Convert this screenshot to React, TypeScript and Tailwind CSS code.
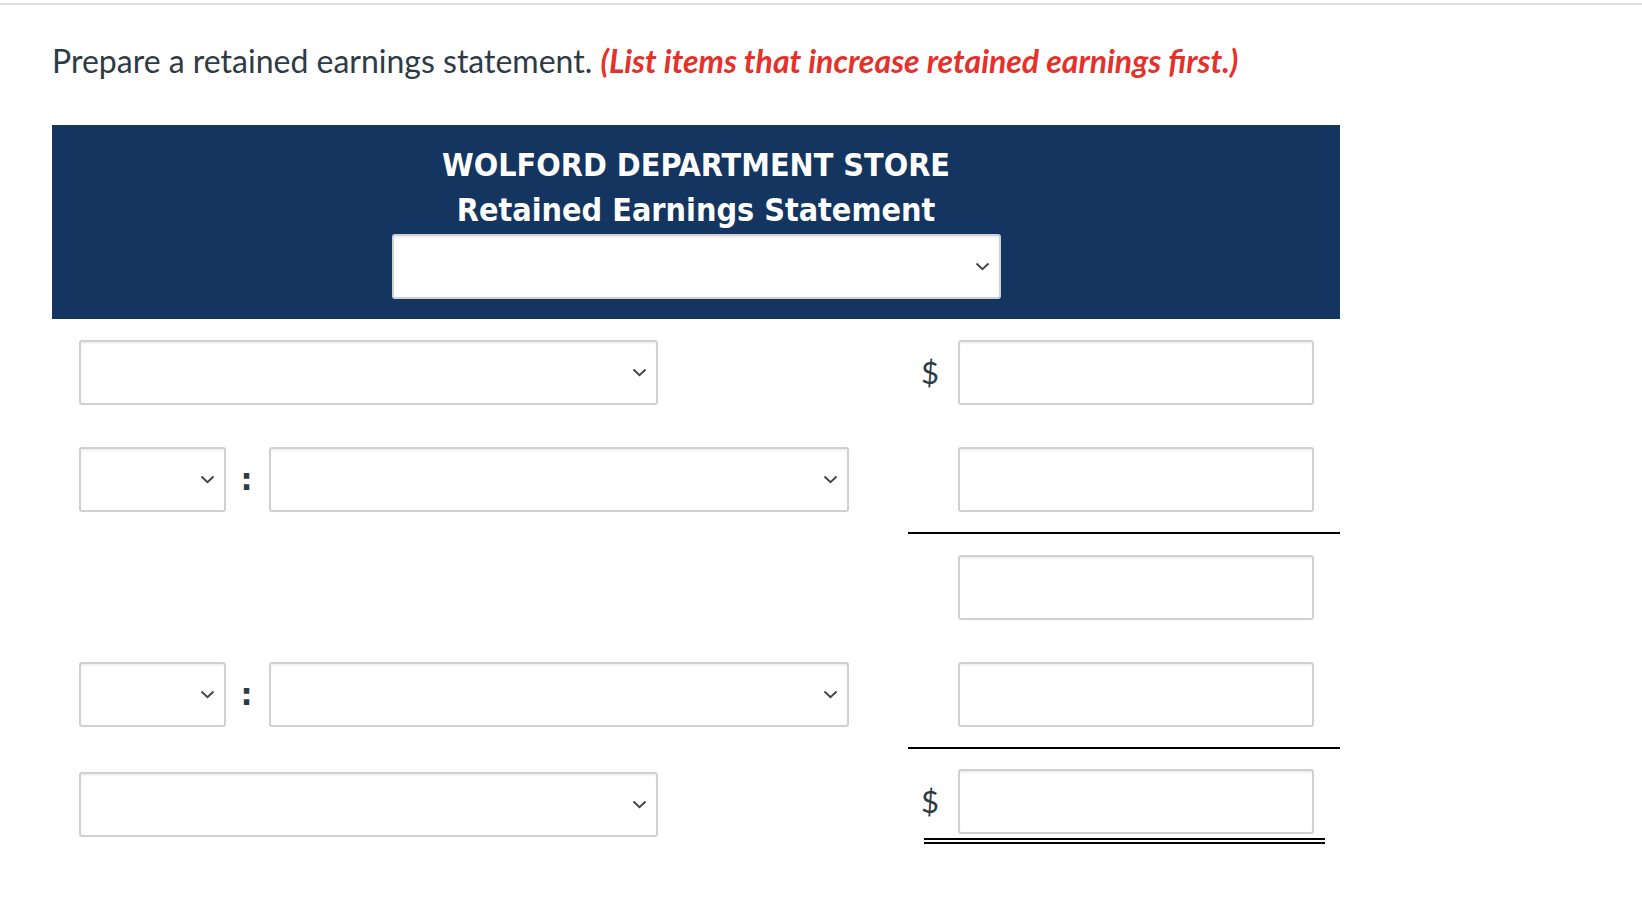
import React from "react";

function Chevron() {
  return (
    <svg width="15" height="9" viewBox="0 0 15 9" fill="none" stroke="#444444" strokeWidth="1.9">
      <path d="M1.5 1.5 7.5 7.3 13.5 1.5" />
    </svg>
  );
}

function Select({ width }: { width: string }) {
  return (
    <div
      className={`${width} h-[65px] flex items-center justify-end pr-[9px] bg-white border-2 border-[#d0d0d0] rounded-[3px] shadow-[inset_0_2px_2px_rgba(0,0,0,0.06)]`}
    >
      <Chevron />
    </div>
  );
}

function Amount({ dollar }: { dollar?: boolean }) {
  return (
    <div className="flex items-center">
      <div className="w-[50px] pr-[19px] text-right text-[31px] text-[#2d3b45]">{dollar ? "$" : ""}</div>
      <div className="w-[356px] h-[65px] bg-white border-2 border-[#d0d0d0] rounded-[3px] shadow-[inset_0_2px_2px_rgba(0,0,0,0.06)]" />
    </div>
  );
}

function PairSelect() {
  return (
    <div className="flex items-center">
      <Select width="w-[147px]" />
      <div className="w-[43px] pr-[2px] text-center text-[30px] font-bold text-[#2d3b45] leading-none font-['DejaVu_Sans',sans-serif]">:</div>
      <Select width="w-[580px]" />
    </div>
  );
}

export default function App() {
  return (
    <div className="min-h-screen bg-white font-['Lato',sans-serif]">
      <div className="mt-[3px] h-[2px] bg-[#dddddd]" />
      <div className="pl-[52px]">
        <p className="mt-[37px] text-[32px] leading-[38px] text-[#2d3b45]">
          Prepare a retained earnings statement.{" "}
          <span className="italic font-bold text-[#e5312a]">(List items that increase retained earnings first.)</span>
        </p>

        <div className="mt-[45px] w-[1288px]">
          {/* heading */}
          <div className="h-[194px] bg-[#13355f] flex flex-col items-center pt-[18px]">
            <div className="text-[32px] leading-[45px] font-bold font-stretch-condensed text-white font-['DejaVu_Sans_Condensed','DejaVu_Sans',sans-serif]">
              WOLFORD DEPARTMENT STORE
            </div>
            <div className="text-[32px] leading-[45px] font-bold font-stretch-condensed text-white font-['DejaVu_Sans_Condensed','DejaVu_Sans',sans-serif]">
              Retained Earnings Statement
            </div>
            <div className="mt-[1px]">
              <Select width="w-[609px]" />
            </div>
          </div>

          {/* row 1 */}
          <div className="flex">
            <div className="w-[856px] pl-[27px] pt-[21px]">
              <Select width="w-[579px]" />
            </div>
            <div className="w-[432px] pt-[21px] pb-[21px]">
              <Amount dollar />
            </div>
          </div>

          {/* row 2 */}
          <div className="flex">
            <div className="w-[856px] pl-[27px] pt-[21px]">
              <PairSelect />
            </div>
            <div className="w-[432px] pt-[21px] pb-[20px] border-b-2 border-black">
              <Amount />
            </div>
          </div>

          {/* row 3 */}
          <div className="flex">
            <div className="w-[856px]" />
            <div className="w-[432px] pt-[21px] pb-[21px]">
              <Amount />
            </div>
          </div>

          {/* row 4 */}
          <div className="flex">
            <div className="w-[856px] pl-[27px] pt-[21px]">
              <PairSelect />
            </div>
            <div className="w-[432px] pt-[21px] pb-[20px] border-b-2 border-black">
              <Amount />
            </div>
          </div>

          {/* row 5 */}
          <div className="flex">
            <div className="w-[856px] pl-[27px] pt-[23px]">
              <Select width="w-[579px]" />
            </div>
            <div className="w-[432px] pt-[20px]">
              <Amount dollar />
              <div className="ml-[16px] mr-[15px] mt-[4px] h-[6px] border-y-2 border-black" />
            </div>
          </div>
        </div>
      </div>
    </div>
  );
}
